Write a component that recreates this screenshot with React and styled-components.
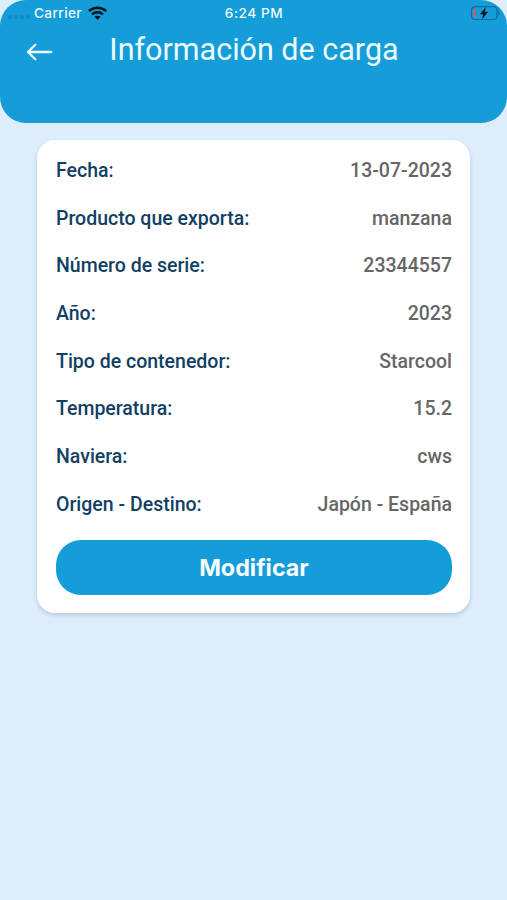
import React from "react";
import styled, { createGlobalStyle } from "styled-components";

const GlobalStyle = createGlobalStyle`
  * {
    box-sizing: border-box;
  }
  body {
    margin: 0;
    background-color: #deedfc;
    font-family: Roboto, sans-serif;
  }
`;

const Container = styled.div`
  min-height: 900px;
  background-color: #deedfc;
`;

const Header = styled.header`
  height: 123px;
  border-radius: 26px;
  background-color: #149dd8;
  color: #edfaff;
`;

const StatusBar = styled.div`
  display: grid;
  grid-template-columns: 1fr auto 1fr;
  align-items: center;
  height: 26px;
  padding: 0 7px 0 8px;
  font-family: Inter, sans-serif;
  font-size: 13.6px;
  font-weight: 500;
  line-height: 26px;
`;

const Carrier = styled.div`
  display: flex;
  align-items: center;
`;

const Dots = styled.div`
  display: flex;
  gap: 2px;
  width: 26px;
  padding-top: 8px;
`;

const Dot = styled.span`
  width: 4px;
  height: 4px;
  border-radius: 50%;
  background-color: #1389bf;
`;

const CarrierName = styled.span`
  letter-spacing: 0.4px;
`;

const WifiIcon = styled.svg`
  width: 19px;
  height: 14px;
  margin-left: 5.5px;
`;

const Time = styled.span`
  letter-spacing: 0.55px;
`;

const BatteryIcon = styled.svg`
  width: 31px;
  height: 16px;
  justify-self: end;
`;

const TitleBar = styled.div`
  display: grid;
  grid-template-columns: 54px 1fr 53px;
  align-items: center;
  height: 47px;
`;

const BackButton = styled.button`
  display: flex;
  padding: 5px 0 0 26px;
  border: none;
  background: none;
  color: inherit;
  cursor: pointer;
`;

const Title = styled.h1`
  margin: 0;
  font-size: 30.5px;
  font-weight: 400;
  line-height: 47px;
  text-align: center;
  white-space: nowrap;
`;

const Card = styled.main`
  width: 433px;
  height: 473px;
  margin: 17px 0 0 37px;
  padding: 6.6px 18px 18px 19px;
  border-radius: 18px;
  background-color: #fff;
  box-shadow: 0 2px 4px rgba(60, 80, 110, 0.24);
`;

const Row = styled.div`
  display: flex;
  align-items: center;
  justify-content: space-between;
  height: 47.7px;
  font-size: 19.5px;
  font-weight: 500;
`;

const Label = styled.span`
  color: #123f63;
`;

const Value = styled.span`
  color: #666;
`;

const Button = styled.button`
  display: block;
  width: 100%;
  height: 55px;
  margin-top: 12px;
  padding: 0;
  border: none;
  border-radius: 25px;
  background-color: #149dd8;
  color: #f7fcff;
  font-family: Inter, sans-serif;
  font-size: 23.3px;
  font-weight: 700;
  cursor: pointer;
`;

const details = [
  { label: "Fecha:", value: "13-07-2023" },
  { label: "Producto que exporta:", value: "manzana" },
  { label: "Número de serie:", value: "23344557" },
  { label: "Año:", value: "2023" },
  { label: "Tipo de contenedor:", value: "Starcool" },
  { label: "Temperatura:", value: "15.2" },
  { label: "Naviera:", value: "cws" },
  { label: "Origen - Destino:", value: "Japón - España" },
];

const Wifi = () => (
  <WifiIcon viewBox="0 0 19 14" fill="none" stroke="#06131d">
    <path d="M.9 5C5.8.6 13.2.6 18.1 5" strokeWidth="2.6" />
    <path d="M4 8.3c3.2-2.8 7.8-2.8 11 0" strokeWidth="2.4" />
    <path d="M9.5 13.8 6.3 10.8c1.8-1.5 4.6-1.5 6.4 0z" fill="#06131d" stroke="none" />
  </WifiIcon>
);

const Battery = () => (
  <BatteryIcon viewBox="0 0 31 16">
    <rect x="2.5" y="1.7" width="25.5" height="12.8" rx="3.5" fill="none" stroke="#0f6c98" strokeWidth="1.2" />
    <rect x="4.3" y="3.5" width="2.6" height="9" rx="1" fill="#bd6075" />
    <path d="M16.9 2 10.9 9.2h3.3L13 14.2l6.1-7.4h-3.4z" fill="#06131d" />
    <path d="M29.2 5.6c1.8.8 1.8 4 0 4.8z" fill="#0f6c98" />
  </BatteryIcon>
);

const App = () => {
  return (
    <>
      <GlobalStyle />
      <Container>
        <Header>
          <StatusBar>
            <Carrier>
              <Dots>
                <Dot />
                <Dot />
                <Dot />
                <Dot />
              </Dots>
              <CarrierName>Carrier</CarrierName>
              <Wifi />
            </Carrier>
            <Time>6:24 PM</Time>
            <Battery />
          </StatusBar>
          <TitleBar>
            <BackButton aria-label="Volver">
              <svg width="27" height="18" viewBox="0 0 27 18" fill="none" stroke="currentColor" strokeWidth="2.3" strokeLinecap="round" strokeLinejoin="round">
                <path d="M9.3 1.8 2 9l7.3 7.2M2 9h23.3" />
              </svg>
            </BackButton>
            <Title>Información de carga</Title>
          </TitleBar>
        </Header>
        <Card>
          {details.map((item) => (
            <Row key={item.label}>
              <Label>{item.label}</Label>
              <Value>{item.value}</Value>
            </Row>
          ))}
          <Button>Modificar</Button>
        </Card>
      </Container>
    </>
  );
};

export default App;
